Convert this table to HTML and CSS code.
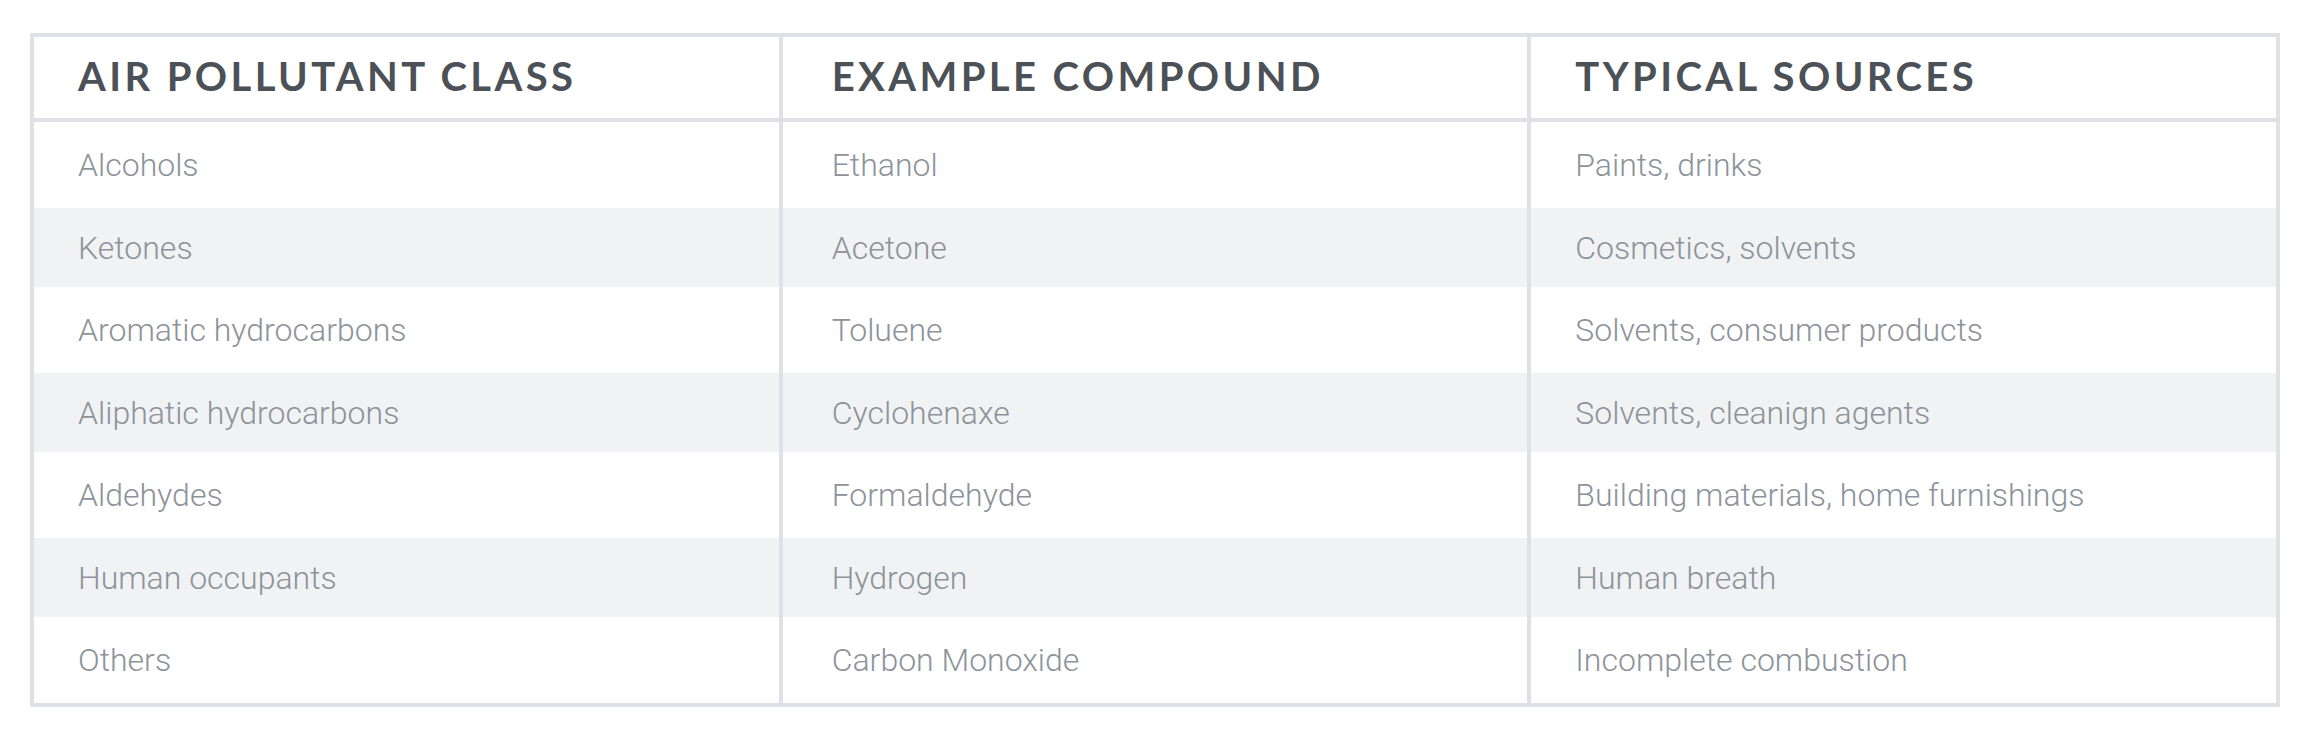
FILE: index.html
```html
<!DOCTYPE html>
<html lang="en">
<head>
<meta charset="utf-8">
<title>Air pollutants</title>
<link rel="stylesheet" href="styles.css">
</head>
<body>
<div class="page">
  <table class="pollutants">
    <colgroup>
      <col class="c1"><col class="c2"><col class="c3">
    </colgroup>
    <thead>
      <tr>
        <th>Air pollutant class</th>
        <th>Example compound</th>
        <th>Typical sources</th>
      </tr>
    </thead>
    <tbody>
      <tr><td>Alcohols</td><td>Ethanol</td><td>Paints, drinks</td></tr>
      <tr><td>Ketones</td><td>Acetone</td><td>Cosmetics, solvents</td></tr>
      <tr><td>Aromatic hydrocarbons</td><td>Toluene</td><td>Solvents, consumer products</td></tr>
      <tr><td>Aliphatic hydrocarbons</td><td>Cyclohenaxe</td><td>Solvents, cleanign agents</td></tr>
      <tr><td>Aldehydes</td><td>Formaldehyde</td><td>Building materials, home furnishings</td></tr>
      <tr><td>Human occupants</td><td>Hydrogen</td><td>Human breath</td></tr>
      <tr><td>Others</td><td>Carbon Monoxide</td><td>Incomplete combustion</td></tr>
    </tbody>
  </table>
</div>
</body>
</html>
```

FILE: styles.css
```css
html, body {
  margin: 0;
  padding: 0;
  background: #ffffff;
}

.page {
  padding: 33px 26px 24px 30px;
}

.pollutants {
  width: 2250px;
  border-collapse: collapse;
  table-layout: fixed;
  border: 4px solid #dfe1e6;
}

.pollutants th,
.pollutants td {
  border-left: 4px solid #dfe1e6;
  border-right: 4px solid #dfe1e6;
  text-align: left;
  vertical-align: middle;
  padding: 0 0 0 44px;
}

.pollutants th {
  height: 85px;
  border-bottom: 4px solid #dfe1e6;
  font-family: "Lato", "Liberation Sans", sans-serif;
  font-weight: 700;
  font-size: 40px;
  letter-spacing: 0.085em;
  text-transform: uppercase;
  color: #4b5157;
  padding-bottom: 4px;
  box-sizing: border-box;
}

.pollutants td {
  font-family: "Roboto", "Liberation Sans", sans-serif;
  font-weight: 300;
  font-size: 32px;
  color: #8d939a;
}

.pollutants tbody tr:nth-child(odd) td {
  height: 86px;
  background: #ffffff;
}

.pollutants tbody tr:nth-child(even) td {
  height: 79px;
  background: #f1f2f4;
}

.pollutants th:nth-child(2),
.pollutants td:nth-child(2) {
  padding-left: 49px;
}

.pollutants th:nth-child(3),
.pollutants td:nth-child(3) {
  padding-left: 44px;
}
```
